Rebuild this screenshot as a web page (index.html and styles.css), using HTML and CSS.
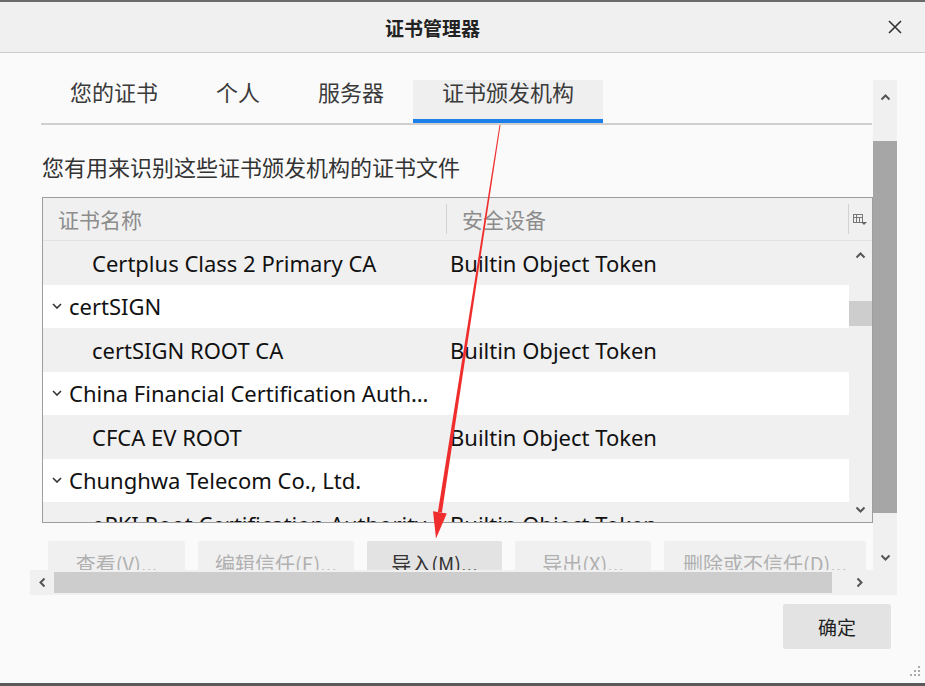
FILE: index.html
```html
<!DOCTYPE html>
<html lang="zh-CN">
  <head>
    <meta charset="UTF-8" />
    <meta name="viewport" content="width=device-width, initial-scale=1.0" />
    <title>证书管理器</title>
    <link rel="stylesheet" href="styles.css">
  </head>
  <body>
    <div class="window">
      <header class="titlebar">
        <h1>证书管理器</h1>
        <button class="close" aria-label="关闭">
          <svg width="16" height="16" viewBox="0 0 16 16"><path d="M2 2 L14 14 M14 2 L2 14" stroke="#333" stroke-width="1.6" fill="none"/></svg>
        </button>
      </header>

      <main class="dialog-body">
        <div class="pane">
          <div class="viewport">
            <div class="content">
              <nav class="tabs">
                <div class="tab"><span>您的证书</span></div>
                <div class="tab"><span>个人</span></div>
                <div class="tab"><span>服务器</span></div>
                <div class="tab active"><span>证书颁发机构</span></div>
              </nav>

              <p class="desc">您有用来识别这些证书颁发机构的证书文件</p>

              <div class="tree">
                <div class="tree-head">
                  <div class="th">证书名称</div>
                  <div class="th sep">安全设备</div>
                  <div class="th picker">
                    <svg width="14" height="13" viewBox="0 0 14 13"><rect x="0.5" y="1.5" width="9" height="8" fill="none" stroke="#777"/><path d="M0.5 4.5 H9.5 M3.5 1.5 V9.5 M6.5 4.5 V9.5" stroke="#777"/><path d="M8 9 H14 L11 12 Z" fill="#666"/></svg>
                  </div>
                </div>
                <div class="tree-body">
                  <div class="rows">
                    <div class="row alt"><span class="cell child">Certplus Class 2 Primary CA</span><span class="cell">Builtin Object Token</span></div>
                    <div class="row"><span class="cell group"><i class="twisty"></i>certSIGN</span><span class="cell"></span></div>
                    <div class="row alt"><span class="cell child">certSIGN ROOT CA</span><span class="cell">Builtin Object Token</span></div>
                    <div class="row"><span class="cell group"><i class="twisty"></i><span class="label">China Financial Certification Authority</span></span><span class="cell"></span></div>
                    <div class="row alt"><span class="cell child">CFCA EV ROOT</span><span class="cell">Builtin Object Token</span></div>
                    <div class="row"><span class="cell group"><i class="twisty"></i>Chunghwa Telecom Co., Ltd.</span><span class="cell"></span></div>
                    <div class="row alt"><span class="cell child">ePKI Root Certification Authority</span><span class="cell">Builtin Object Token</span></div>
                  </div>
                  <div class="scrollbar small">
                    <span class="arrow up"></span>
                    <span class="thumb"></span>
                    <span class="arrow down"></span>
                  </div>
                </div>
              </div>

              <div class="actions">
                <button class="btn view" disabled>查看(V)...</button>
                <button class="btn edit" disabled>编辑信任(E)...</button>
                <button class="btn import">导入(M)...</button>
                <button class="btn export" disabled>导出(X)...</button>
                <button class="btn delete" disabled>删除或不信任(D)...</button>
              </div>
            </div>
          </div>

          <div class="scrollbar big">
            <span class="arrow up"></span>
            <span class="thumb"></span>
            <span class="arrow down"></span>
          </div>

          <div class="hscroll">
            <span class="arrow left"></span>
            <span class="thumb"></span>
            <span class="arrow right"></span>
          </div>
          <div class="corner"></div>
        </div>

        <footer class="dialog-foot">
          <button class="btn ok">确定</button>
        </footer>
      </main>

      <svg class="grip" width="16" height="16" viewBox="0 0 16 16">
        <g fill="#aaa"><rect x="13" y="3" width="2" height="2"/><rect x="9" y="7" width="2" height="2"/><rect x="13" y="7" width="2" height="2"/><rect x="5" y="11" width="2" height="2"/><rect x="9" y="11" width="2" height="2"/><rect x="13" y="11" width="2" height="2"/></g>
      </svg>

      <svg class="annotation" width="925" height="686" viewBox="0 0 925 686">
        <polygon points="500.5,125 499.5,125 437.9,512 441.9,512.6" fill="#ef2d2d"/>
        <polygon points="446.8,513.4 433,511.2 436,538.5" fill="#ef2d2d"/>
      </svg>
    </div>
  </body>
</html>
```

FILE: styles.css
```css
* {
  box-sizing: border-box;
}

html,
body {
  margin: 0;
  height: 100%;
}

body {
  font-family: "Noto Sans", "Noto Sans CJK SC", sans-serif;
  color: #222;
  background: #fafafa;
  overflow: hidden;
}

button {
  font-family: inherit;
}

.window {
  position: relative;
  height: 686px;
  border-top: 2px solid #6b6b6b;
  border-bottom: 3px solid #5a5a5a;
  background: #fafafa;
  display: flex;
  flex-direction: column;
}

/* title bar */
.titlebar {
  flex: none;
  height: 51px;
  display: flex;
  align-items: center;
  background: #f0f0f0;
  border-bottom: 1px solid #cdcdcd;
}

.titlebar h1 {
  flex: 1;
  margin: 0;
  text-align: center;
  font-family: "Noto Sans CJK SC", sans-serif;
  font-size: 19px;
  font-weight: bold;
  color: #222;
}

.close {
  width: 60px;
  height: 50px;
  border: none;
  background: none;
  display: flex;
  align-items: center;
  justify-content: center;
  padding: 0;
}

/* scroll pane */
.dialog-body {
  flex: 1;
  padding-top: 27px;
}

.pane {
  margin-left: 30px;
  width: 867px;
  display: grid;
  grid-template-columns: 843px 24px;
  grid-template-rows: 490px 25px;
}

.viewport {
  clip-path: inset(-8px 0 0 0);
}

.content {
  padding-left: 12px;
}

.tabs {
  display: flex;
  width: 831px;
  border-bottom: 2px solid #cfcfcf;
  margin-left: -1px;
}

.tab {
  height: 43px;
  padding: 0 29px;
  display: flex;
  align-items: flex-start;
  font-family: "Noto Sans CJK SC", sans-serif;
  font-size: 22px;
  line-height: 23px;
  color: #3a3a3a;
  border-bottom: 4px solid transparent;
}

.tab.active {
  background: #efefef;
  border-bottom-color: #1a7fe8;
}

.desc {
  margin: 26px 0 16px;
  line-height: 30px;
  font-family: "Noto Sans CJK SC", sans-serif;
  font-size: 22px;
  color: #333;
}

/* tree */
.tree {
  width: 831px;
  border: 1px solid #9e9e9e;
  background: #fff;
}

.tree-head {
  height: 43px;
  display: grid;
  grid-template-columns: 403px 1fr 24px;
  align-items: center;
  background: #f0f0f0;
  border-bottom: 1px solid #e2e2e2;
}

.th {
  height: 30px;
  display: flex;
  align-items: center;
  padding-left: 15px;
  font-family: "Noto Sans CJK SC", sans-serif;
  font-size: 21px;
  color: #8c8c8c;
}

.th.sep {
  border-left: 1px solid #d2d2d2;
}

.th.picker {
  padding-left: 4px;
  border-left: 1px solid #d2d2d2;
}

.tree-body {
  height: 281px;
  display: flex;
}

.rows {
  flex: 1;
  overflow: hidden;
}

.row {
  height: 43.5px;
  display: grid;
  grid-template-columns: 403px 1fr;
  align-items: center;
  font-size: 22px;
  color: #111;
}

.row.alt {
  background: #f0f0f0;
}

.cell {
  white-space: nowrap;
  overflow: hidden;
  padding-left: 4px;
}

.cell.child {
  padding-left: 49px;
}

.cell.group {
  padding-left: 9px;
  display: flex;
  align-items: center;
  gap: 7px;
}

.label {
  overflow: hidden;
  text-overflow: ellipsis;
  padding-right: 12px;
}

.twisty {
  flex: none;
  width: 10px;
  height: 6px;
  background: no-repeat center / 10px 6px url("data:image/svg+xml;utf8,<svg xmlns='http://www.w3.org/2000/svg' width='10' height='6'><path d='M1 1 L5 5 L9 1' stroke='%23333' stroke-width='1.6' fill='none'/></svg>");
}

/* scrollbars */
.scrollbar {
  display: flex;
  flex-direction: column;
  background: #f0f0f0;
}

.scrollbar.small {
  width: 23px;
}

.scrollbar.small .arrow.up {
  height: 28px;
  margin-bottom: 32px;
}

.scrollbar.small .thumb {
  height: 25px;
  background: #cdcdcd;
}

.scrollbar.small .arrow.down {
  margin-top: auto;
  height: 25px;
}

.scrollbar.big .arrow.up {
  height: 34px;
  margin-bottom: 27px;
}

.scrollbar.big .thumb {
  height: 372px;
  background: #a6a6a6;
}

.scrollbar.big .arrow.down {
  margin-top: auto;
  height: 26px;
}

.arrow {
  flex: none;
  background-repeat: no-repeat;
  background-position: center;
  background-size: 11px 11px;
}

.arrow.up {
  background-image: url("data:image/svg+xml;utf8,<svg xmlns='http://www.w3.org/2000/svg' width='11' height='11'><path d='M1.5 7.5 L5.5 3.5 L9.5 7.5' stroke='%23555' stroke-width='2' fill='none'/></svg>");
}

.arrow.down {
  background-image: url("data:image/svg+xml;utf8,<svg xmlns='http://www.w3.org/2000/svg' width='11' height='11'><path d='M1.5 3.5 L5.5 7.5 L9.5 3.5' stroke='%23555' stroke-width='2' fill='none'/></svg>");
}

.arrow.left {
  background-image: url("data:image/svg+xml;utf8,<svg xmlns='http://www.w3.org/2000/svg' width='11' height='11'><path d='M7.5 1.5 L3.5 5.5 L7.5 9.5' stroke='%23555' stroke-width='2' fill='none'/></svg>");
}

.arrow.right {
  background-image: url("data:image/svg+xml;utf8,<svg xmlns='http://www.w3.org/2000/svg' width='11' height='11'><path d='M3.5 1.5 L7.5 5.5 L3.5 9.5' stroke='%23555' stroke-width='2' fill='none'/></svg>");
}

.hscroll {
  display: flex;
  align-items: stretch;
  background: #f0f0f0;
}

.hscroll .arrow {
  width: 24px;
}

.hscroll .thumb {
  width: 778px;
  margin: 2px 0;
  background: #cdcdcd;
}

.hscroll .arrow.right {
  margin-left: auto;
  width: 28px;
}

.corner {
  background: #f0f0f0;
}

/* buttons */
.actions {
  display: flex;
  gap: 13px;
  margin-top: 18px;
  padding-left: 6px;
}

.btn {
  flex: none;
  height: 44px;
  padding: 0;
  border: none;
  border-radius: 2px;
  background: #e3e3e3;
  color: #333;
  font-family: "Noto Sans CJK SC", sans-serif;
  font-size: 20px;
}

.btn:disabled {
  background: #f0f0f0;
  color: #b0b0b0;
}

.btn.view {
  width: 137px;
}

.btn.edit {
  width: 156px;
}

.btn.import {
  width: 135px;
}

.btn.export {
  width: 136px;
}

.btn.delete {
  width: 202px;
}

.dialog-foot {
  display: flex;
  justify-content: flex-end;
  padding: 9px 34px 0 0;
}

.btn.ok {
  width: 108px;
  height: 45px;
  font-size: 19px;
  color: #222;
}

.grip {
  position: absolute;
  right: 4px;
  bottom: 4px;
}

.annotation {
  position: absolute;
  top: -2px;
  left: 0;
  pointer-events: none;
}
```
